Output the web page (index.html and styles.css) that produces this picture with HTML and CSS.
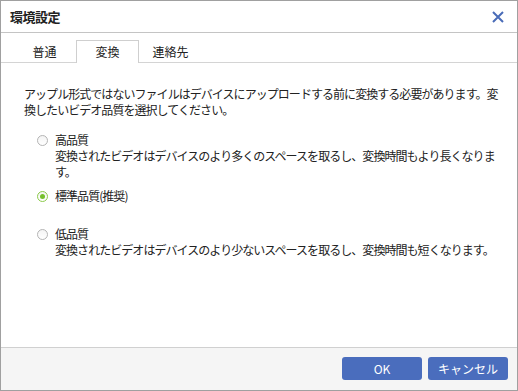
FILE: index.html
```html
<!DOCTYPE html>
<html lang="ja">
<head>
    <meta charset="UTF-8">
    <title>環境設定</title>
    <link rel="stylesheet" href="styles.css">
</head>
<body>
    <div class="dialog">
        <div class="title-bar">
            <span class="title">環境設定</span>
            <svg class="close" width="12" height="12" viewBox="0 0 12 12">
                <path d="M1 1 L11 11 M11 1 L1 11" stroke="#4a6cb8" stroke-width="2" fill="none"/>
            </svg>
        </div>

        <div class="tabs">
            <div class="tab">普通</div>
            <div class="tab active">変換</div>
            <div class="tab">連絡先</div>
        </div>

        <div class="content">
            <p class="intro">アップル形式ではないファイルはデバイスにアップロードする前に変換する必要があります。変換したいビデオ品質を選択してください。</p>

            <div class="option">
                <span class="radio"></span>
                <div class="option-text">
                    <div class="label">高品質</div>
                    <div class="desc">変換されたビデオはデバイスのより多くのスペースを取るし、変換時間もより長くなります。</div>
                </div>
            </div>

            <div class="option">
                <span class="radio checked"></span>
                <div class="option-text">
                    <div class="label">標準品質(推奨)</div>
                    <div class="desc empty"></div>
                </div>
            </div>

            <div class="option">
                <span class="radio"></span>
                <div class="option-text">
                    <div class="label">低品質</div>
                    <div class="desc">変換されたビデオはデバイスのより少ないスペースを取るし、変換時間も短くなります。</div>
                </div>
            </div>
        </div>

        <div class="footer">
            <button class="btn">OK</button>
            <button class="btn">キャンセル</button>
        </div>
    </div>
</body>
</html>
```

FILE: styles.css
```css
body {
    margin: 0;
    font-family: "Noto Sans CJK JP", "Noto Sans", sans-serif;
    font-size: 12px;
    color: #222;
}
.dialog {
    width: 518px;
    height: 391px;
    box-sizing: border-box;
    border: 1px solid #a0a0a0;
    display: flex;
    flex-direction: column;
    background: #fff;
}
.title-bar {
    height: 31px;
    border-bottom: 1px solid #c4c4c4;
    display: flex;
    align-items: center;
    justify-content: space-between;
    padding: 0 13px 0 9px;
}
.title {
    font-weight: bold;
    font-size: 13px;
    letter-spacing: -0.5px;
}
.tabs {
    height: 29px;
    border-bottom: 1px solid #d4d4d4;
    display: flex;
    align-items: flex-end;
    padding-left: 12px;
}
.tab {
    width: 63px;
    height: 23px;
    line-height: 22px;
    text-align: center;
    box-sizing: border-box;
    margin-bottom: -1px;
    border: 1px solid transparent;
    border-bottom: none;
}
.tab.active {
    border-color: #cfcfcf;
    background: #fff;
}
.content {
    flex: 1;
    padding: 23px 16px 0 23px;
}
.intro {
    margin: 0 0 14px;
    line-height: 16px;
    letter-spacing: -0.95px;
}
.option {
    display: flex;
    align-items: flex-start;
    margin-top: 8px;
    padding-left: 13px;
}
.radio {
    width: 11px;
    height: 11px;
    box-sizing: border-box;
    border: 1px solid #b4b4b4;
    border-radius: 50%;
    background: linear-gradient(#f4f4f4, #fff);
    margin-top: 3px;
    margin-right: 7px;
    flex-shrink: 0;
    display: flex;
    align-items: center;
    justify-content: center;
}
.radio.checked {
    border-color: #8ccb4a;
}
.radio.checked::after {
    content: "";
    width: 5px;
    height: 5px;
    border-radius: 50%;
    background: #76c02e;
}
.option-text {
    line-height: 16px;
    letter-spacing: -0.95px;
}
.desc.empty {
    height: 14px;
}
.footer {
    height: 43px;
    border-top: 1px solid #d0d0d0;
    background: #f5f5f5;
    display: flex;
    justify-content: flex-end;
    align-items: flex-start;
    gap: 6px;
    padding: 9px 9px 0 0;
    box-sizing: border-box;
}
.btn {
    width: 80px;
    height: 23px;
    border: none;
    border-radius: 3px;
    background: #4a6dbd;
    color: #fff;
    font-family: "Noto Sans CJK JP", "Noto Sans", sans-serif;
    font-size: 12px;
    padding: 0;
}
```
